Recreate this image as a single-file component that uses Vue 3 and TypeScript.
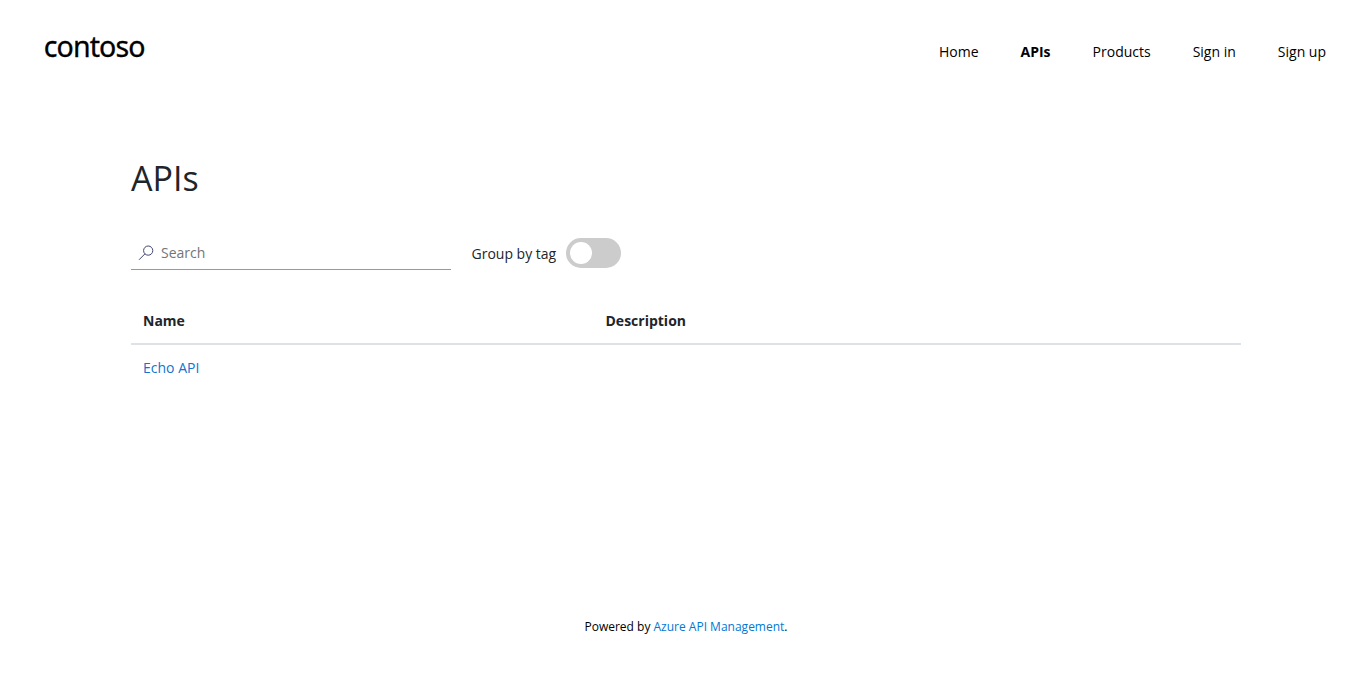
<script setup lang="ts">
import { ref } from 'vue'

interface NavItem {
  label: string
  active?: boolean
}

const navItems: NavItem[] = [
  { label: 'Home' },
  { label: 'APIs', active: true },
  { label: 'Products' },
  { label: 'Sign in' },
  { label: 'Sign up' },
]
const apis = [{ name: 'Echo API', description: '' }]
const search = ref('')
const grouped = ref(false)
</script>

<template>
  <div class="page">
    <header class="header">
      <svg class="logo" width="110" height="44" viewBox="0 0 110 44" role="img" aria-label="contoso">
        <text transform="translate(-0.3 27) scale(0.985 1)" x="0" y="0">contoso</text>
      </svg>
      <nav class="nav">
        <a v-for="item in navItems" :key="item.label" class="nav-link" :class="{ active: item.active }">{{ item.label }}</a>
      </nav>
    </header>
    <main class="content">
      <h1 class="title">APIs</h1>
      <div class="toolbar">
        <label class="search">
          <svg class="search-icon" width="16" height="16" viewBox="0 0 16 16" fill="none" stroke="#3f4670" stroke-width="1">
            <circle cx="10.2" cy="5.6" r="4.6" />
            <path d="M6.9 8.9 L1 14.8" />
          </svg>
          <input v-model="search" class="search-input" type="text" placeholder="Search" />
        </label>
        <span class="toggle-label">Group by tag</span>
        <button class="toggle" :class="{ on: grouped }" type="button" aria-label="Group by tag" @click="grouped = !grouped">
          <span class="knob"></span>
        </button>
      </div>
      <div class="table">
        <div class="row head">
          <div class="cell">Name</div>
          <div class="cell">Description</div>
        </div>
        <div v-for="api in apis" :key="api.name" class="row">
          <div class="cell"><a class="link">{{ api.name }}</a></div>
          <div class="cell">{{ api.description }}</div>
        </div>
      </div>
    </main>
    <footer class="footer">Powered by <a class="footer-link">Azure API Management</a>.</footer>
  </div>
</template>

<style>
body {
  margin: 0;
  background: #fff;
}
</style>

<style scoped>
.page {
  box-sizing: border-box;
  height: 676px;
  display: flex;
  flex-direction: column;
  overflow: hidden;
  font: 14px/21px "Open Sans", sans-serif;
  color: #212529;
}
.header {
  display: flex;
  justify-content: space-between;
  align-items: flex-start;
  height: 105px;
  box-sizing: border-box;
  padding: 30px 46px 0 44px;
}
.logo {
  display: block;
  overflow: visible;
}
.logo text {
  font: 400 29px "Noto Sans", sans-serif;
  letter-spacing: -0.9px;
  fill: #000;
  stroke: #000;
  stroke-width: 0.3px;
}
.nav {
  display: flex;
  gap: 42px;
  padding-top: 11px;
}
.nav-link {
  color: #000;
}
.nav-link.active {
  font-weight: 700;
}
.content {
  width: 1110px;
  margin: 0 auto;
  flex: 1;
}
.title {
  margin: 52px 0 0;
  font-size: 34px;
  line-height: 42px;
  font-weight: 400;
}
.toolbar {
  display: flex;
  align-items: center;
  margin-top: 37px;
  height: 34px;
}
.search {
  box-sizing: border-box;
  width: 320px;
  height: 34px;
  display: flex;
  align-items: center;
  padding-left: 7px;
  border-bottom: 1px solid #999;
}
.search-icon {
  flex: none;
}
.search-input {
  flex: 1;
  min-width: 0;
  border: 0;
  outline: 0;
  padding: 0;
  margin-left: 7px;
  background: transparent;
  font: inherit;
  color: #212529;
}
.search-input::placeholder {
  color: #757575;
  opacity: 1;
}
.toggle-label {
  margin-left: 20.5px;
  padding-top: 1px;
}
.toggle {
  width: 55px;
  height: 30px;
  margin-left: 9.5px;
  padding: 0 4px;
  border: 0;
  border-radius: 15px;
  background: #ccc;
  display: flex;
  align-items: center;
}
.toggle.on {
  justify-content: flex-end;
  background: #0078d4;
}
.knob {
  width: 22px;
  height: 22px;
  border-radius: 50%;
  background: #fff;
}
.table {
  margin-top: 28px;
}
.row {
  display: grid;
  grid-template-columns: 462.5px 1fr;
}
.cell {
  padding: 12px;
}
.head {
  font-weight: 700;
  border-bottom: 2px solid #dee2e6;
}
.link {
  color: #1174cf;
}
.footer {
  height: 60px;
  text-align: center;
  font-size: 12px;
  line-height: 21px;
  color: #000;
}
.footer-link {
  color: #0078d4;
}
</style>
